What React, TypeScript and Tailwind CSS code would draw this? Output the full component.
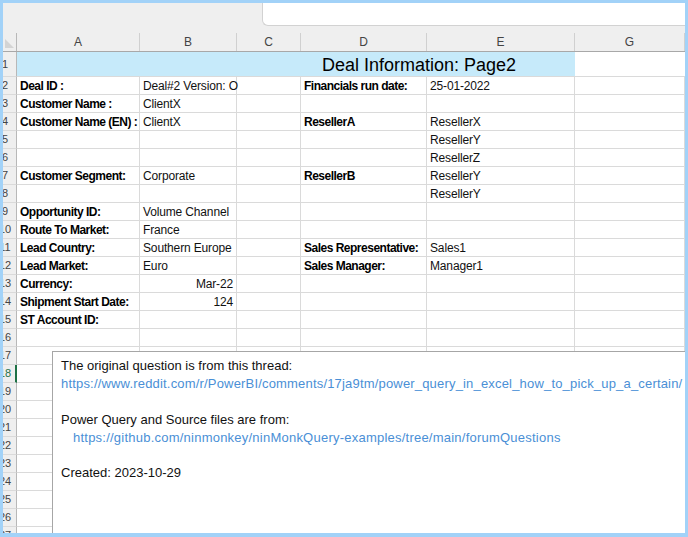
import React from 'react';

const cols = ['w-[123px]', 'w-[97px]', 'w-[64px]', 'w-[126px]', 'w-[148px]', 'w-[110px]'];
const letters = ['A', 'B', 'C', 'D', 'E', 'G'];

type Cell = { t: string; b?: boolean; r?: boolean };
type Row = Record<number, Cell>;

// keyed by column index (0 = A ... 5 = G)
const rows: Row[] = [
  { 0: { t: 'Deal ID :', b: true }, 1: { t: 'Deal#2 Version: O' }, 3: { t: 'Financials run date:', b: true }, 4: { t: '25-01-2022' } },
  { 0: { t: 'Customer Name :', b: true }, 1: { t: 'ClientX' } },
  { 0: { t: 'Customer Name (EN) :', b: true }, 1: { t: 'ClientX' }, 3: { t: 'ResellerA', b: true }, 4: { t: 'ResellerX' } },
  { 4: { t: 'ResellerY' } },
  { 4: { t: 'ResellerZ' } },
  { 0: { t: 'Customer Segment:', b: true }, 1: { t: 'Corporate' }, 3: { t: 'ResellerB', b: true }, 4: { t: 'ResellerY' } },
  { 4: { t: 'ResellerY' } },
  { 0: { t: 'Opportunity ID:', b: true }, 1: { t: 'Volume Channel' } },
  { 0: { t: 'Route To Market:', b: true }, 1: { t: 'France' } },
  { 0: { t: 'Lead Country:', b: true }, 1: { t: 'Southern Europe' }, 3: { t: 'Sales Representative:', b: true }, 4: { t: 'Sales1' } },
  { 0: { t: 'Lead Market:', b: true }, 1: { t: 'Euro' }, 3: { t: 'Sales Manager:', b: true }, 4: { t: 'Manager1' } },
  { 0: { t: 'Currency:', b: true }, 1: { t: 'Mar-22', r: true } },
  { 0: { t: 'Shipment Start Date:', b: true }, 1: { t: '124', r: true } },
  { 0: { t: 'ST Account ID:', b: true } },
  {}, {}, {}, {}, {}, {}, {}, {}, {}, {}, {}, {},
];

const RowHead = ({ n, active }: { n: number; active?: boolean }) => (
  <div
    className={`w-[14px] shrink-0 overflow-hidden bg-[#efefef] border-b border-[#dadada] flex items-center ${
      active ? 'border-r-2 border-r-[#1e7145] bg-[#e4e4e4]' : 'border-r border-r-[#b8b8b8]'
    }`}
  >
    <span className={`block w-[30px] -ml-[13px] shrink-0 text-center text-[11px] ${active ? 'text-[#1e7145]' : 'text-[#444]'}`}>{n}</span>
  </div>
);

export default function App() {
  return (
    <div className="w-[688px] h-[537px] bg-[#a2d2f8] pt-[3px] pl-[3px] pr-[3px] pb-[4px] overflow-hidden" style={{ fontFamily: '"Liberation Sans", Arial, sans-serif' }}>
      <div className="relative w-full h-full bg-white overflow-hidden">
        {/* formula bar strip */}
        <div className="flex h-[30px] bg-[#efefef]">
          <div className="w-[259px] shrink-0" />
          <div className="flex-1 h-[23px] bg-white border-l border-b border-[#d2d2d2] rounded-bl-[6px]" />
        </div>

        {/* column headers */}
        <div className="flex h-[19px] bg-[#efefef] border-b border-[#a8a8a8]">
          <div className="w-[14px] shrink-0 border-r border-[#b8b8b8] relative">
            <div className="absolute left-[2px] bottom-[3px] w-0 h-0 border-l-[9px] border-l-transparent border-b-[9px] border-b-[#d4d4d4]" style={{ transform: 'scaleX(-1)' }} />
          </div>
          {letters.map((l, i) => (
            <div key={l} className={`${cols[i]} shrink-0 border-r border-[#d0d0d0] flex items-center justify-center text-[12px] text-[#444]`}>
              {l}
            </div>
          ))}
        </div>

        {/* row 1 title */}
        <div className="flex h-[25px]">
          <RowHead n={1} />
          <div className="w-[558px] shrink-0 bg-[#c6eafa] border-b border-[#dadada] flex items-end pb-[1px] pl-[305px] text-[18px] leading-[20px] text-black whitespace-nowrap">
            Deal Information: Page2
          </div>
          <div className="w-[110px] shrink-0 border-b border-[#dadada]" />
        </div>

        {rows.map((row, ri) => (
          <div key={ri} className="flex h-[18px]">
            <RowHead n={ri + 2} active={ri + 2 === 18} />
            {cols.map((w, ci) => {
              const c = row[ci];
              return (
                <div
                  key={ci}
                  className={`${w} shrink-0 border-r border-b border-[#dadada] flex items-center px-[3px] whitespace-nowrap overflow-visible ${
                    c?.r ? 'justify-end' : ''
                  }`}
                >
                  {c && (
                    <span className={c.b ? 'font-bold text-[12px] tracking-[-0.5px] text-black' : 'text-[12px] tracking-[-0.15px] text-[#111]'}>
                      {c.t}
                    </span>
                  )}
                </div>
              );
            })}
          </div>
        ))}

        {/* text box lying over the sheet */}
        <div className="absolute left-[49px] top-[348px] w-[700px] h-[220px] bg-white border border-[#a6a6a6] pl-[8px] pt-[5px] text-[13px] leading-[18px] text-[#111]">
          <div>The original question is from this thread:</div>
          <div className="text-[#4a8fd6] whitespace-nowrap tracking-[0.18px]">https://www.reddit.com/r/PowerBI/comments/17ja9tm/power_query_in_excel_how_to_pick_up_a_certain/</div>
          <div>&nbsp;</div>
          <div>Power Query and Source files are from:</div>
          <div className="text-[#4a8fd6] whitespace-nowrap pl-[12px] tracking-[0.23px]">https://github.com/ninmonkey/ninMonkQuery-examples/tree/main/forumQuestions</div>
          <div>&nbsp;</div>
          <div className="-mt-[1px]">Created: 2023-10-29</div>
        </div>
      </div>
    </div>
  );
}
